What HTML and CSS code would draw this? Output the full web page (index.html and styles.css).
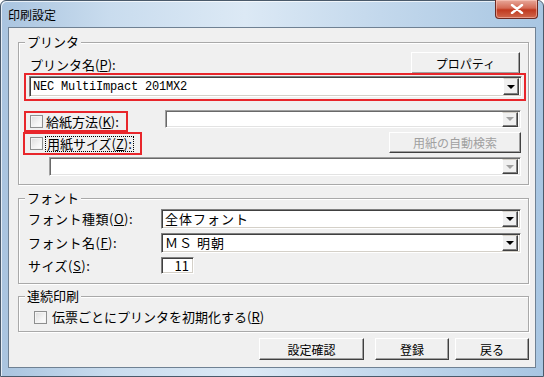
FILE: index.html
```html
<!DOCTYPE html>
<html>
    <head>
        <meta charset="utf-8" />
        <title>印刷設定</title>
        <link rel="stylesheet" href="styles.css">
    </head>
    <body>
        <div class="window">
            <div class="titlebar">
                <span class="title">印刷設定</span>
                <div class="close">
                    <svg width="14" height="10" viewBox="0 0 14 10">
                        <path d="M2 1 L12 9 M12 1 L2 9" stroke="#fff" stroke-width="2.4" stroke-linecap="round"/>
                    </svg>
                </div>
            </div>

            <div class="client">
                <!-- プリンタ -->
                <div class="group printer">
                    <span class="legend">プリンタ</span>
                    <div class="row head">
                        <span class="label">プリンタ名(<u>P</u>):</span>
                        <div class="btn props">プロパティ</div>
                    </div>
                    <div class="mark wide">
                        <div class="combo">
                            <span class="value mono">NEC MultiImpact 201MX2</span>
                            <span class="drop"><i></i></span>
                        </div>
                    </div>
                    <div class="row feed">
                        <div class="mark feedmark">
                            <span class="check"></span>
                            <span class="label">給紙方法(<u>K</u>):</span>
                        </div>
                        <div class="combo disabled feedcombo">
                            <span class="value"></span>
                            <span class="drop"><i></i></span>
                        </div>
                    </div>
                    <div class="row size">
                        <div class="mark sizemark">
                            <span class="check"></span>
                            <span class="label focus">用紙サイズ(<u>Z</u>):</span>
                        </div>
                        <div class="btn disabled auto">用紙の自動検索</div>
                    </div>
                    <div class="combo disabled sizecombo">
                        <span class="value"></span>
                        <span class="drop"><i></i></span>
                    </div>
                </div>

                <!-- フォント -->
                <div class="group font">
                    <span class="legend">フォント</span>
                    <div class="row field">
                        <span class="label">フォント種類(<u>O</u>):</span>
                        <div class="combo fcombo">
                            <span class="value">全体フォント</span>
                            <span class="drop"><i></i></span>
                        </div>
                    </div>
                    <div class="row field">
                        <span class="label">フォント名(<u>F</u>):</span>
                        <div class="combo fcombo">
                            <span class="value">ＭＳ 明朝</span>
                            <span class="drop"><i></i></span>
                        </div>
                    </div>
                    <div class="row field">
                        <span class="label">サイズ(<u>S</u>):</span>
                        <div class="edit">11</div>
                    </div>
                </div>

                <!-- 連続印刷 -->
                <div class="group serial">
                    <span class="legend">連続印刷</span>
                    <div class="row opt">
                        <span class="check"></span>
                        <span class="label">伝票ごとにプリンタを初期化する(<u>R</u>)</span>
                    </div>
                </div>

                <div class="actions">
                    <div class="btn confirm">設定確認</div>
                    <div class="btn save">登録</div>
                    <div class="btn back">戻る</div>
                </div>
            </div>
        </div>
    </body>
</html>
```

FILE: styles.css
```css
* {
    margin: 0;
    padding: 0;
    box-sizing: border-box;
}
html, body {
    width: 544px;
    height: 377px;
    overflow: hidden;
    background: #fff;
}
body {
    font-family: "Noto Sans CJK JP", "Liberation Sans", sans-serif;
    font-size: 13px;
    color: #000;
}
u {
    text-decoration: underline;
    text-underline-offset: 1px;
}
.window {
    display: flex;
    flex-direction: column;
    width: 544px;
    height: 377px;
    padding: 0 7px 8px 7px;
    border: 1px solid #4a5a6b;
    border-radius: 6px 6px 0 0;
    background: linear-gradient(90deg, #a9c4df 0%, #c9dcee 20%, #dce9f5 45%, #c3d8ec 70%, #a8c6e2 100%);
    box-shadow: inset 1px 1px 0 rgba(255, 255, 255, 0.7);
}
.titlebar {
    display: flex;
    align-items: flex-start;
    height: 26px;
}
.title {
    margin: 6px 0 0 0;
    line-height: 16px;
    font-size: 12px;
    color: #000;
}
.close {
    display: flex;
    align-items: center;
    justify-content: center;
    margin: -1px -2px 0 auto;
    width: 43px;
    height: 19px;
    border: 1px solid #6d2a22;
    border-top: 0;
    border-radius: 0 0 4px 4px;
    background: linear-gradient(180deg, #e8a89a 0%, #d46a55 45%, #c0391f 55%, #d0684d 100%);
    box-shadow: inset 0 0 0 1px rgba(255, 210, 200, 0.5);
}
.client {
    display: flex;
    flex-direction: column;
    flex: 1;
    border: 1px solid #6f8193;
    background: #f0f0f0;
    padding: 0 6px 0 9px;
}
.group {
    display: flex;
    flex-direction: column;
    width: 511px;
    border: 1px solid #a9a9a9;
    box-shadow: 1px 1px 0 #fff, inset 1px 1px 0 #fff;
}
.legend {
    align-self: flex-start;
    margin: -8px 0 0 6px;
    padding: 0 2px;
    line-height: 14px;
    background: #f0f0f0;
}
.label {
    line-height: 14px;
    white-space: nowrap;
}
.row {
    display: flex;
}
.printer {
    margin-top: 14px;
    padding-bottom: 8px;
}
.head {
    height: 22px;
    margin-top: 3px;
    align-items: flex-end;
}
.head .label {
    margin: 0 0 2px 11px;
}
.btn {
    display: flex;
    align-items: center;
    justify-content: center;
    height: 22px;
    font-size: 12px;
    background: #f0f0f0;
    border: 1px solid;
    border-color: #fff #404040 #404040 #fff;
    box-shadow: inset -1px -1px 0 #a0a0a0;
    white-space: nowrap;
}
.btn.disabled {
    color: #a0a0a0;
}
.props {
    width: 109px;
    margin: 0 8px 0 auto;
}
.mark {
    border: 2px solid #e8262b;
}
.wide {
    position: relative;
    margin: -1px 2px 0 5px;
    padding: 1px 2px 2px 3px;
}
.combo {
    display: flex;
    align-items: center;
    height: 21px;
    background: #fff;
    border: 1px solid;
    border-color: #808080 #fff #fff #808080;
    box-shadow: inset 1px 1px 0 #404040, inset -1px -1px 0 #d4d0c8;
}
.combo .value {
    flex: 1;
    padding-left: 3px;
    line-height: 14px;
    white-space: nowrap;
}
.fcombo .value {
    letter-spacing: 1px;
}
.mono {
    font-family: "Liberation Mono", monospace;
    font-size: 12px;
    letter-spacing: -0.2px;
}
.drop {
    display: flex;
    align-items: center;
    justify-content: center;
    width: 16px;
    height: 17px;
    margin-right: 2px;
    background: #f0f0f0;
    border: 1px solid;
    border-color: #d4d0c8 #404040 #404040 #fff;
    box-shadow: inset -1px -1px 0 #808080;
}
.drop i {
    width: 0;
    height: 0;
    border-left: 4px solid transparent;
    border-right: 4px solid transparent;
    border-top: 4px solid #000;
}
.combo.disabled .drop i {
    border-top-color: #a0a0a0;
}
.combo.disabled {
    border-color: #a0a0a0 #fff #fff #a0a0a0;
    box-shadow: inset 1px 1px 0 #696969, inset -1px -1px 0 #e3e3e3;
}
.check {
    flex: none;
    width: 13px;
    height: 13px;
    border: 1px solid #8e8f8f;
    background: linear-gradient(135deg, #dcdcdc 0%, #f4f4f4 60%, #fff 100%);
    box-shadow: inset 0 0 0 1px #f4f4f4;
}
.feed {
    margin-top: 9px;
    height: 22px;
    align-items: flex-start;
}
.feedmark {
    display: flex;
    align-items: center;
    width: 104px;
    height: 21px;
    margin: 1px 0 0 5px;
    padding-left: 4px;
}
.feedmark .label,
.sizemark .label {
    margin-left: 3px;
}
.feedcombo {
    width: 356px;
    height: 18px;
    margin: 0 7px 0 auto;
}
.feedcombo .drop,
.sizecombo .drop {
    height: 15px;
}
.size {
    height: 22px;
    align-items: flex-start;
}
.sizemark {
    display: flex;
    align-items: center;
    width: 119px;
    height: 23px;
    margin-left: 4px;
    padding-left: 5px;
}
.focus {
    padding: 0 1px;
    outline: 1px dotted #000;
    outline-offset: 0;
}
.auto {
    width: 132px;
    height: 21px;
    margin: 0 7px 0 auto;
}
.sizecombo {
    height: 19px;
    margin: 3px 7px 0 30px;
}
.font {
    margin-top: 13px;
    padding-bottom: 9px;
}
.field {
    align-items: center;
    margin-top: 4px;
}
.field .label {
    width: 133px;
    margin-left: 9px;
    letter-spacing: 0.5px;
}
.fcombo {
    flex: 1;
    height: 20px;
    margin-right: 7px;
}
.fcombo .drop {
    height: 16px;
}
.edit {
    width: 33px;
    height: 17px;
    padding-right: 4px;
    text-align: right;
    line-height: 15px;
    background: #fff;
    border: 1px solid;
    border-color: #808080 #fff #fff #808080;
    box-shadow: inset 1px 1px 0 #404040, inset -1px -1px 0 #d4d0c8;
}
.serial {
    margin-top: 12px;
    padding-bottom: 7px;
}
.opt {
    align-items: center;
    height: 14px;
    margin: 7px 0 0 15px;
}
.opt .label {
    margin-left: 5px;
}
.actions {
    display: flex;
    justify-content: flex-end;
    margin-top: 6px;
}
.confirm {
    width: 105px;
}
.save {
    width: 74px;
    margin-left: 11px;
}
.back {
    width: 74px;
    margin-left: 6px;
}
```
